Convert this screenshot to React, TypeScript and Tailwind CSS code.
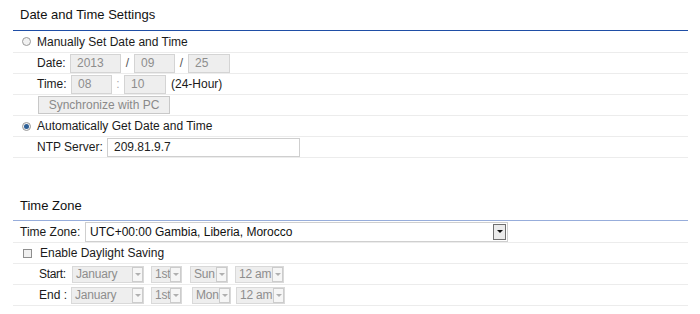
import React from 'react';

const Radio = ({ checked }: { checked?: boolean }) => (
  <span className="w-[9px] h-[9px] rounded-full border border-[#9a9a9a] bg-[#f1f1f1] flex items-center justify-center shrink-0">
    {checked && <span className="w-[5px] h-[5px] rounded-full bg-[#2d5f96]"></span>}
  </span>
);

const Box = ({ w, value, light }: { w: string; value: string; light?: boolean }) => (
  <span className={`${w} h-[19px] border flex items-center px-[6px] ${light ? 'bg-white border-[#cfcfcf] text-[#222]' : 'bg-[#eeeeee] border-[#d4d4d4] text-[#8d8d8d]'}`}>{value}</span>
);

const Dd = ({ w, value }: { w: string; value: string }) => (
  <span className={`${w} h-[17px] bg-[#eeeeee] border border-[#d9d9d9] flex items-center pl-[3px] text-[#8d8d8d] shrink-0`}>
    <span className="flex-1 min-w-0 whitespace-nowrap tracking-[-0.2px]">{value}</span>
    <span className="relative w-[11px] h-[15px] border border-[#cccccc] bg-[#f6f6f6] flex items-center justify-center shrink-0">
      <span className="w-0 h-0 border-l-[3px] border-r-[3px] border-t-[3px] border-l-transparent border-r-transparent border-t-[#b0b0b0]"></span>
    </span>
  </span>
);

const Row = ({ children, first, className = '' }: { children: React.ReactNode; first?: boolean; className?: string }) => (
  <div className={`${first ? 'h-[22px]' : 'h-[21px]'} border-b border-[#ececec] flex items-center whitespace-nowrap ${className}`}>{children}</div>
);

export default function App() {
  return (
    <div className="w-[700px] h-[314px] bg-white text-[12px] text-[#1a1a1a] overflow-hidden" style={{ fontFamily: '"Liberation Sans", Arial, sans-serif' }}>
      <div className="ml-[13px] w-[675px]">
        <div className="h-[31px] border-b border-[#1f4ea6] flex items-center pl-[7px] pb-[1px] text-[13px] text-[#111]">Date and Time Settings</div>
        <Row first className="pl-[9px] gap-[6px]">
          <Radio />
          <span>Manually Set Date and Time</span>
        </Row>
        <Row className="pl-[24px]">
          <span className="w-[33px]">Date:</span>
          <Box w="w-[51px]" value="2013" />
          <span className="w-[13px] text-center text-[#555]">/</span>
          <Box w="w-[41px]" value="09" />
          <span className="w-[13px] text-center text-[#555]">/</span>
          <Box w="w-[42px]" value="25" />
        </Row>
        <Row className="pl-[24px]">
          <span className="w-[34px]">Time:</span>
          <Box w="w-[41px]" value="08" />
          <span className="w-[12px] text-center text-[#aaa]">:</span>
          <Box w="w-[42px]" value="10" />
          <span className="ml-[5px]">(24-Hour)</span>
        </Row>
        <Row className="pl-[25px]">
          <span className="w-[132px] h-[18px] bg-[#efefef] border border-[#c8c8c8] flex items-center justify-center text-[#8a8a8a]">Synchronize with PC</span>
        </Row>
        <Row className="pl-[9px] gap-[6px]">
          <Radio checked />
          <span>Automatically Get Date and Time</span>
        </Row>
        <Row className="pl-[24px]">
          <span className="w-[70px]">NTP Server:</span>
          <Box w="w-[193px]" value="209.81.9.7" light />
        </Row>

        <div className="h-[32px]"></div>

        <div className="h-[31px] border-b border-[#97addb] flex items-center pl-[7px] pt-[2px] text-[13px] text-[#111]">Time Zone</div>
        <Row first className="pl-[7px]">
          <span className="w-[65px]">Time Zone:</span>
          <span className="w-[423px] h-[20px] border border-[#cfcfcf] bg-white flex items-center justify-between pl-[4px] pr-[1px] text-[#111]">
            <span>UTC+00:00 Gambia, Liberia, Morocco</span>
            <span className="w-[13px] h-[16px] border border-[#707070] bg-[#ececec] flex items-center justify-center">
              <span className="w-0 h-0 border-l-[3px] border-r-[3px] border-t-[3px] border-l-transparent border-r-transparent border-t-[#111]"></span>
            </span>
          </span>
        </Row>
        <Row className="pl-[10px] gap-[8px]">
          <span className="w-[9px] h-[9px] border border-[#8e8e8e] bg-[#f0f0f0]"></span>
          <span>Enable Daylight Saving</span>
        </Row>
        <Row className="pl-[26px]">
          <span className="w-[33px] tracking-[-0.3px]">Start:</span>
          <Dd w="w-[72px]" value="January" />
          <span className="w-[7px]"></span>
          <Dd w="w-[31px]" value="1st" />
          <span className="w-[8px]"></span>
          <Dd w="w-[38px]" value="Sun" />
          <span className="w-[7px]"></span>
          <Dd w="w-[49px]" value="12 am" />
        </Row>
        <Row className="pl-[26px]">
          <span className="w-[32px]">End :</span>
          <Dd w="w-[73px]" value="January" />
          <span className="w-[7px]"></span>
          <Dd w="w-[31px]" value="1st" />
          <span className="w-[10px]"></span>
          <Dd w="w-[39px]" value="Mon" />
          <span className="w-[5px]"></span>
          <Dd w="w-[49px]" value="12 am" />
        </Row>
      </div>
    </div>
  );
}
